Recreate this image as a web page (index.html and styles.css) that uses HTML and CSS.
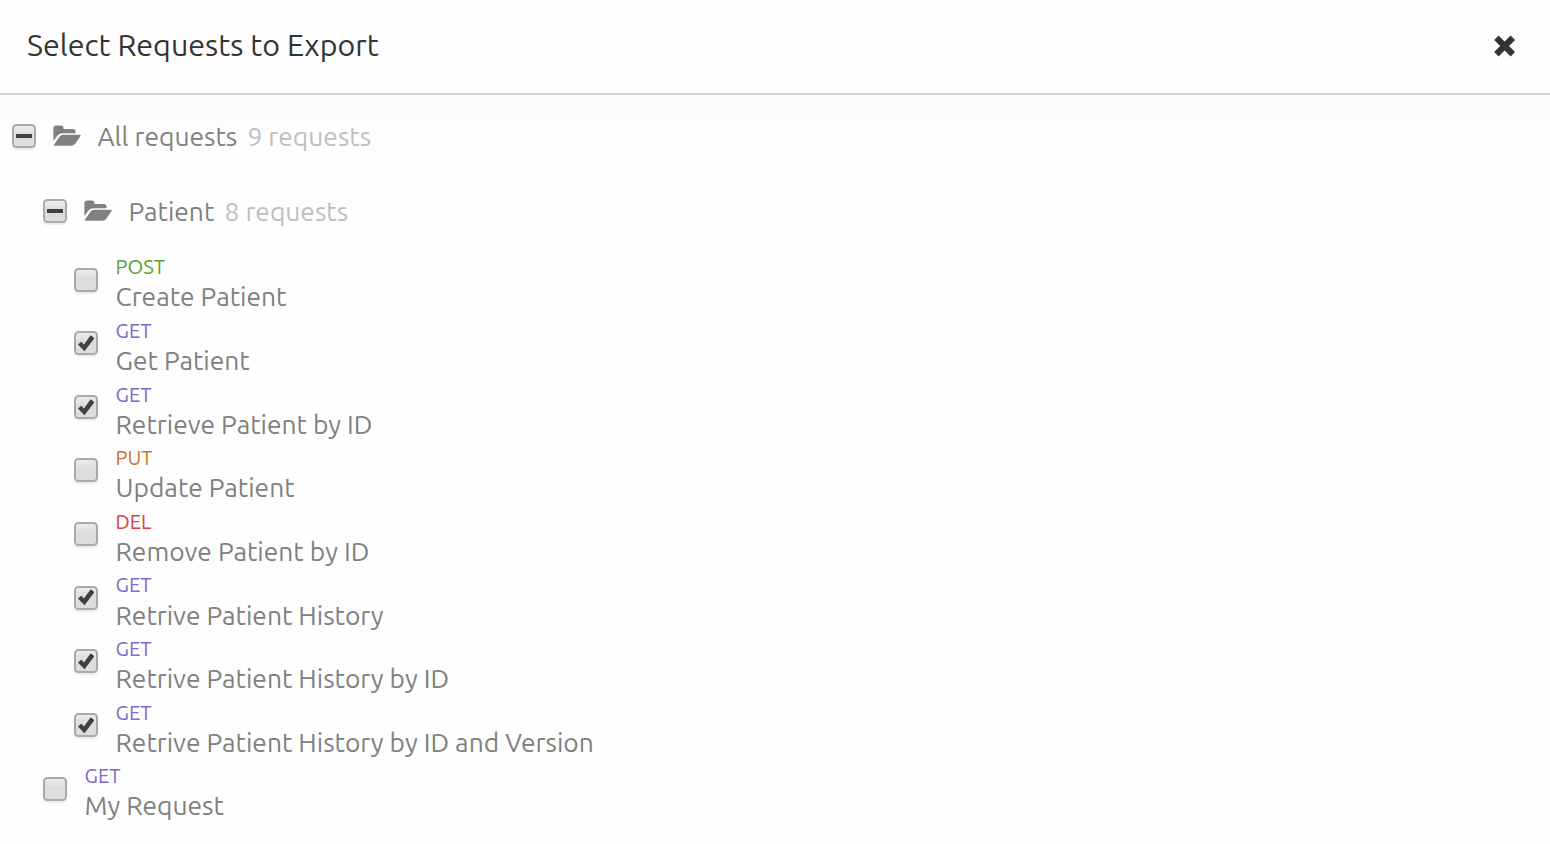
FILE: index.html
```html
<!DOCTYPE html>
<html lang="en">
<head>
<meta charset="utf-8">
<title>Select Requests to Export</title>
<link rel="stylesheet" href="styles.css">
</head>
<body>
<svg width="0" height="0" class="defs">
  <symbol id="folder" viewBox="0 0 28 21"><path d="M.4 16.5V3.3Q.4 .6 3.1 .6H7.9Q10.6 .6 10.6 3.3V3.9H19.9Q22.5 3.9 22.5 6.5V8.3H9.5Q6.5 8.3 4.5 10.6L.4 15.9ZM1.3 20.8Q.5 20.8 .9 19.8L6.4 11.8Q7.7 9.8 10.3 9.8H26.9Q28.1 9.8 27.5 11L22.3 18.8Q20.9 20.8 18.3 20.8Z"/></symbol>
  <symbol id="check" viewBox="0 0 16 16"><path d="M0 9.3 3 6.5 5.8 9.3 12.3 .2 16 2.9 6.3 15.8Z"/></symbol>
</svg>
<header class="header">
  <h1 class="title">Select Requests to Export</h1>
  <svg class="close" viewBox="0 0 22 22"><path d="M4.6 5 16.6 17M16.6 5 4.6 17"/></svg>
</header>
<main class="tree">
  <div class="folder"><span class="box mixed"></span><svg class="icon"><use href="#folder"/></svg><span class="name">All requests</span><span class="count">9 requests</span></div>
  <div class="folder nested"><span class="box mixed"></span><svg class="icon"><use href="#folder"/></svg><span class="name">Patient</span><span class="count">8 requests</span></div>
  <div class="request"><span class="box"></span><div class="info"><span class="method post">POST</span><span class="name">Create Patient</span></div></div>
  <div class="request"><span class="box"><svg class="tick"><use href="#check"/></svg></span><div class="info"><span class="method get">GET</span><span class="name">Get Patient</span></div></div>
  <div class="request"><span class="box"><svg class="tick"><use href="#check"/></svg></span><div class="info"><span class="method get">GET</span><span class="name">Retrieve Patient by ID</span></div></div>
  <div class="request"><span class="box"></span><div class="info"><span class="method put">PUT</span><span class="name">Update Patient</span></div></div>
  <div class="request"><span class="box"></span><div class="info"><span class="method del">DEL</span><span class="name">Remove Patient by ID</span></div></div>
  <div class="request"><span class="box"><svg class="tick"><use href="#check"/></svg></span><div class="info"><span class="method get">GET</span><span class="name">Retrive Patient History</span></div></div>
  <div class="request"><span class="box"><svg class="tick"><use href="#check"/></svg></span><div class="info"><span class="method get">GET</span><span class="name">Retrive Patient History by ID</span></div></div>
  <div class="request"><span class="box"><svg class="tick"><use href="#check"/></svg></span><div class="info"><span class="method get">GET</span><span class="name">Retrive Patient History by ID and Version</span></div></div>
  <div class="request outer"><span class="box"></span><div class="info"><span class="method get">GET</span><span class="name">My Request</span></div></div>
</main>
</body>
</html>
```
FILE: styles.css
```css
* { box-sizing: border-box; }
body {
  margin: 0;
  height: 844px;
  overflow: hidden;
  background: #fefefe;
  color: #808080;
  font-family: Ubuntu, "Noto Sans", sans-serif;
}
.defs { display: none; }
.header {
  height: 95px;
  padding: 0 34.5px 2px 27px;
  border-bottom: 2px solid #d2d2d2;
  display: flex;
  align-items: center;
  justify-content: space-between;
  background: #fefefe;
}
.title {
  margin: 0 0 1px;
  color: #333;
  font-size: 30.4px;
  font-weight: 400;
  line-height: 40px;
  white-space: nowrap;
}
.close {
  width: 22px;
  height: 22px;
  overflow: visible;
  stroke: #333;
  stroke-width: 6.2;
  stroke-linecap: square;
  stroke-linejoin: round;
}
.tree {
  height: 749px;
  padding-top: 3px;
  background: linear-gradient(#fafafa, #fefefe 40px);
}
.folder {
  height: 75px;
  padding-left: 12px;
  display: flex;
  align-items: center;
}
.nested { padding-left: 43px; }
.box {
  width: 24px;
  height: 24px;
  flex: none;
  border: 2px solid #a9a9a9;
  border-radius: 4.5px;
  background: linear-gradient(#ececec, #dcdcdc 45%, #dedede);
  box-shadow: 0 2px 1px #ececec;
  display: flex;
  align-items: center;
  justify-content: center;
}
.mixed::before {
  content: "";
  width: 16px;
  height: 4px;
  background: #404040;
}
.tick { width: 16.5px; height: 16.5px; flex: none; fill: #404040; }
.icon {
  width: 28px;
  height: 21px;
  margin-left: 17.2px;
  margin-right: 16.3px;
  fill: #808080;
}
.name {
  font-size: 26.36px;
  line-height: 36px;
  white-space: nowrap;
}
.count {
  margin-left: 10.2px;
  color: #bfbfbf;
  font-size: 26.36px;
  line-height: 36px;
}
.request {
  height: 63.64px;
  padding-left: 74px;
  display: flex;
  align-items: center;
}
.request .box { margin-bottom: .6px; }
.outer { padding-left: 43px; }
.info {
  padding-top: 10.2px;
  margin-left: 17.5px;
  display: flex;
  flex-direction: column;
  align-items: flex-start;
}
.method { font-size: 20.2px; line-height: 24px; }
.info .name { margin-top: -.85px; }
.post { color: #59a22b; }
.get { color: #7d69cb; }
.put { color: #d07528; }
.del { color: #d04444; }
```
